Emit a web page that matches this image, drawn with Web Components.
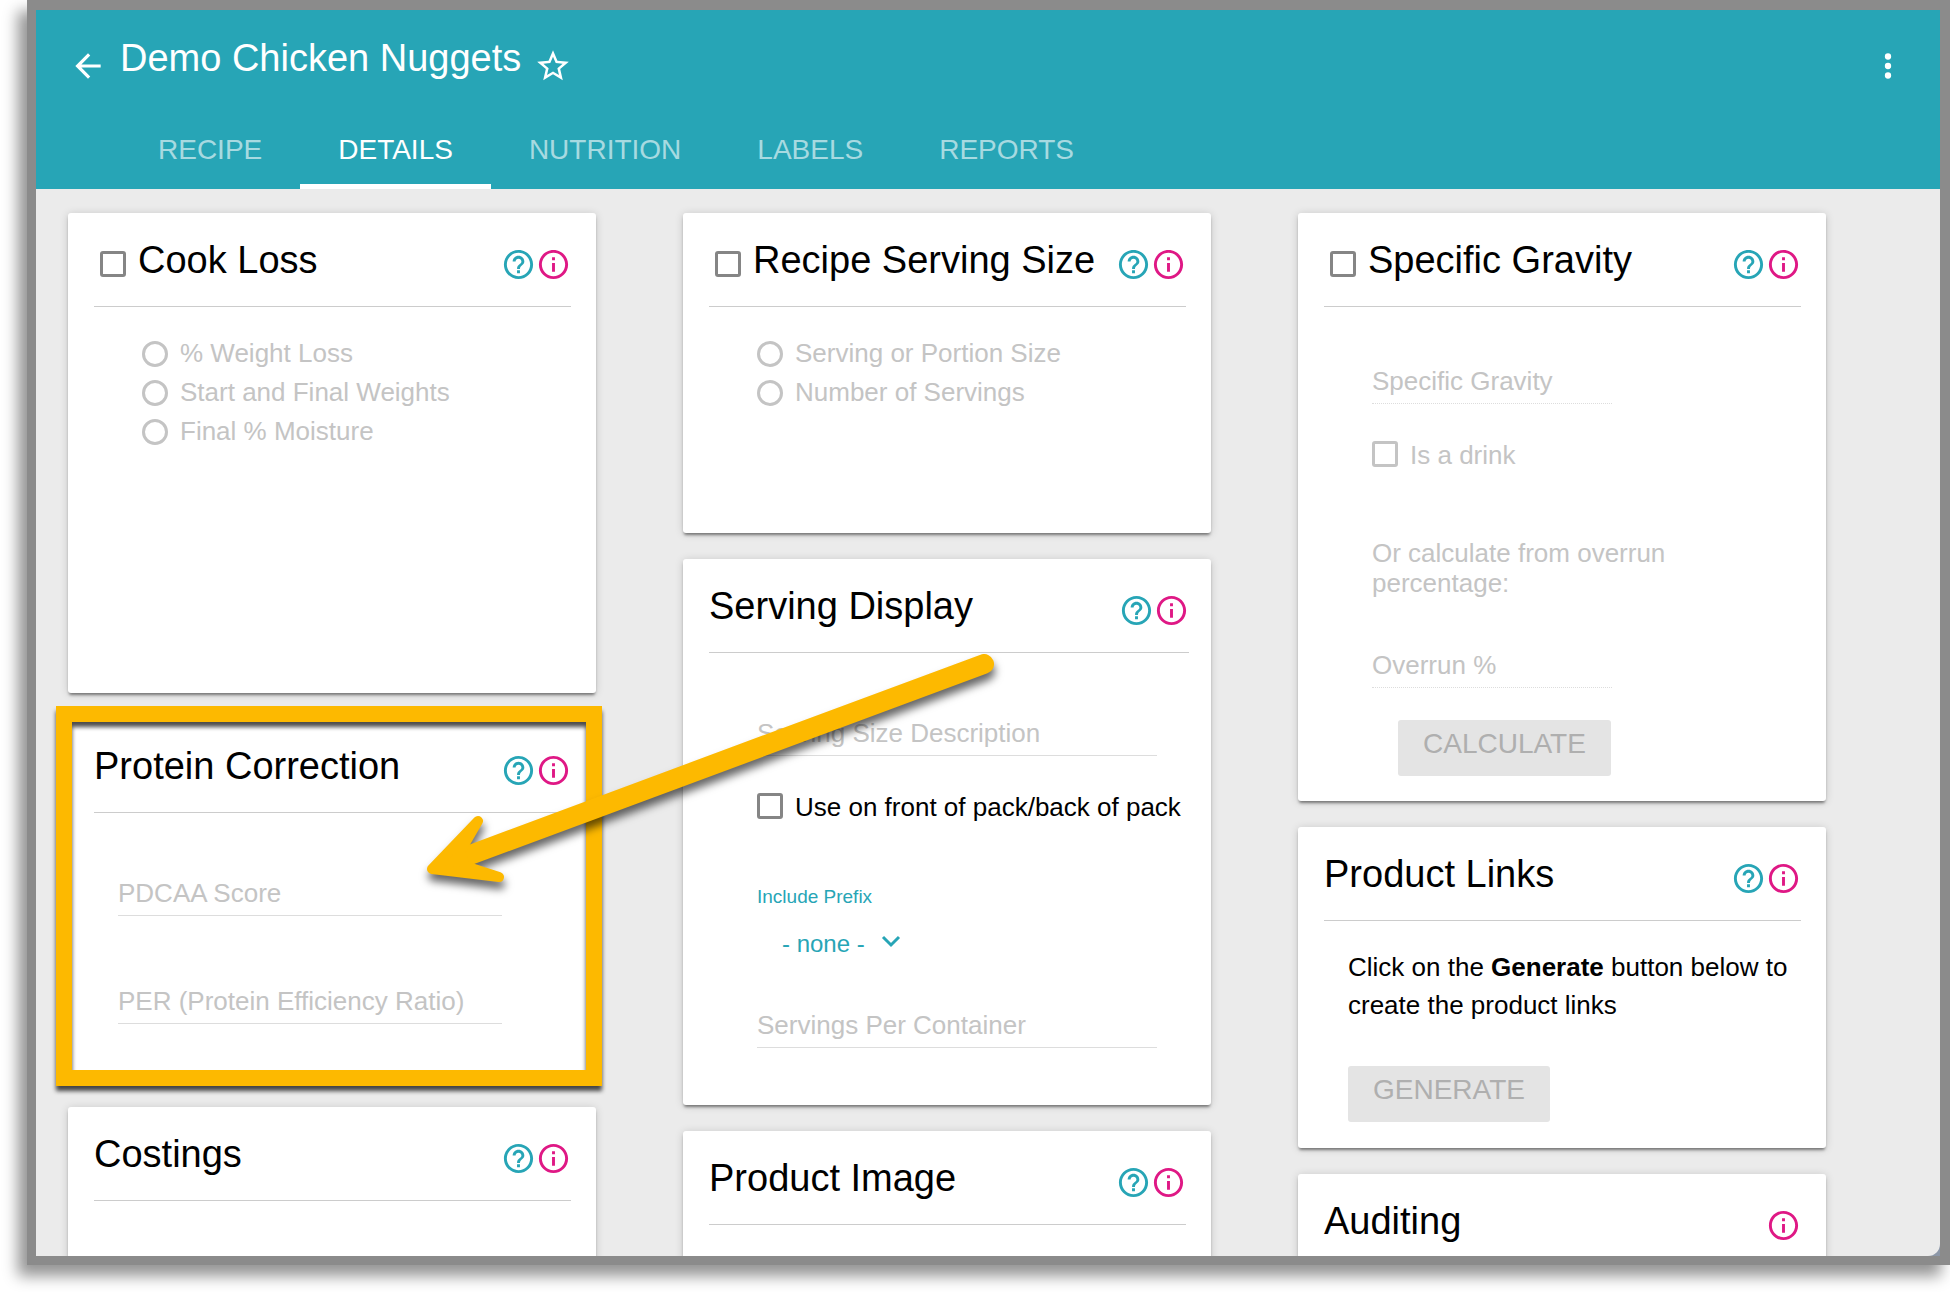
<!DOCTYPE html>
<html lang="en">
<head>
<meta charset="utf-8">
<title>Demo Chicken Nuggets</title>
<style>
  html, body { margin: 0; height: 100%; background: #fff; overflow: hidden; }
  body {
    --teal: #27a5b6; --pink: #df1885; --amber: #fdb900;
    --ink: #000; --muted: #c4c4c4; --box: #858585;
    font: 26px/38px "Liberation Sans", Arial, Helvetica, sans-serif;
    color: var(--ink);
  }
  .column { display: flex; flex-direction: column; gap: 26px; min-width: 0; }
  .tall { min-height: 480px; }
  .medium { min-height: 320px; }
  .wide { --head-end: 22px; }
  .deep { --body-top: 65px; --body-bottom: 57px; }
  .outer { --body-start: 50px; }
  .short { width: 240px; --line: dotted; }
  .note { margin: 0; line-height: 30px; color: var(--muted); }
  .copy { margin: 0; }
  .field-gap { margin-top: 70px; }
  .row-gap { margin-top: 32px; }
  .section-gap { margin-top: 63px; }
  .block-gap { margin-top: 52px; }
  .indent { margin-left: 26px; }
  .button-gap { margin-top: 42px; }
</style>
</head>
<body>
<recipe-window>
  <recipe-header slot="header" heading="Demo Chicken Nuggets">
    <recipe-tab>RECIPE</recipe-tab>
    <recipe-tab active>DETAILS</recipe-tab>
    <recipe-tab>NUTRITION</recipe-tab>
    <recipe-tab>LABELS</recipe-tab>
    <recipe-tab>REPORTS</recipe-tab>
  </recipe-header>

  <div class="column">
    <detail-card class="tall" heading="Cook Loss" toggle help>
      <choice-row type="radio" name="loss" label="% Weight Loss" disabled></choice-row>
      <choice-row type="radio" name="loss" label="Start and Final Weights" disabled></choice-row>
      <choice-row type="radio" name="loss" label="Final % Moisture" disabled></choice-row>
    </detail-card>
    <detail-card class="deep outer" style="--body-end:94px" heading="Protein Correction" help highlight>
      <text-field label="PDCAA Score"></text-field>
      <text-field class="field-gap" label="PER (Protein Efficiency Ratio)"></text-field>
      <pointer-arrow slot="over"></pointer-arrow>
    </detail-card>
    <detail-card class="medium" heading="Costings" help></detail-card>
  </div>

  <div class="column">
    <detail-card class="medium" heading="Recipe Serving Size" toggle help>
      <choice-row type="radio" name="size" label="Serving or Portion Size" disabled></choice-row>
      <choice-row type="radio" name="size" label="Number of Servings" disabled></choice-row>
    </detail-card>
    <detail-card class="deep wide" style="--body-end:54px" heading="Serving Display" help>
      <text-field label="Serving Size Description"></text-field>
      <choice-row class="row-gap" type="checkbox" label="Use on front of pack/back of pack"></choice-row>
      <prefix-select style="margin-top:59px" label="Include Prefix"></prefix-select>
      <text-field class="block-gap" label="Servings Per Container"></text-field>
    </detail-card>
    <detail-card class="medium" heading="Product Image" help></detail-card>
  </div>

  <div class="column">
    <detail-card style="--body-top:59px;--body-bottom:25px" heading="Specific Gravity" toggle help>
      <text-field class="short" label="Specific Gravity" disabled></text-field>
      <choice-row class="row-gap" type="checkbox" label="Is a drink" disabled></choice-row>
      <p class="note section-gap">Or calculate from overrun percentage:</p>
      <text-field class="short block-gap" label="Overrun %" disabled></text-field>
      <flat-button class="row-gap indent">CALCULATE</flat-button>
    </detail-card>
    <detail-card class="outer" style="--body-end:25px;--body-bottom:26px" heading="Product Links" help>
      <p class="copy">Click on the <b>Generate</b> button below to create the product links</p>
      <flat-button class="button-gap">GENERATE</flat-button>
    </detail-card>
    <detail-card class="medium" heading="Auditing"></detail-card>
  </div>
</recipe-window>

<script>
const base = `*,*::before,*::after{box-sizing:border-box}
  button,input,select{font:inherit;color:inherit;margin:0;padding:0;border:0;background:none;border-radius:0}
  svg{display:block}`;

class Piece extends HTMLElement {
  connectedCallback() {
    if (this.shadowRoot) return;
    this.attachShadow({ mode: 'open' }).innerHTML = `<style>${base}${this.css()}</style>${this.html()}`;
  }
  attr(n) { return this.getAttribute(n) || ''; }
  has(n) { return this.hasAttribute(n); }
}

customElements.define('recipe-window', class extends Piece {
  css() { return `
    :host{display:flex;flex-direction:column;height:calc(100vh - 27px);margin-left:27px;
      border:solid #8b8b8b;border-width:10px 10px 9px 9px;background:#8c97a8;
      box-shadow:-9px 11px 14px rgba(0,0,0,.42);box-sizing:border-box}
    main{flex:1;min-height:0;overflow:hidden;background:#ebebeb;border-bottom-right-radius:12px;
      display:grid;grid-template-columns:repeat(3,minmax(0,1fr));column-gap:87px;align-items:start;
      padding:24px 114px 0 32px}`; }
  html() { return `<slot name="header"></slot><main><slot></slot></main>`; }
});

customElements.define('recipe-header', class extends Piece {
  css() { return `
    :host{display:block;background:var(--teal);color:#fff;padding:26px 33px 0}
    .bar{display:flex;align-items:flex-end;gap:13px;height:49px}
    h1{margin:0;align-self:flex-start;font-size:38px;line-height:44px;font-weight:400;white-space:nowrap}
    .more{margin-left:auto}
    svg{width:38px;height:38px;fill:#fff}
    nav{display:flex;margin:28px 0 0 51px}`; }
  html() { return `
    <div class="bar">
      <button aria-label="Back"><svg viewBox="0 0 24 24"><path d="M20 11H7.83l5.59-5.59L12 4l-8 8 8 8 1.41-1.41L7.83 13H20v-2z"/></svg></button>
      <h1>${this.attr('heading')}</h1>
      <button aria-label="Favourite"><svg viewBox="0 0 24 24"><path d="M22 9.24l-7.19-.62L12 2 9.19 8.63 2 9.24l5.46 4.73L5.82 21 12 17.27 18.18 21l-1.63-7.03L22 9.24zM12 15.4l-3.76 2.27 1-4.28-3.32-2.88 4.38-.38L12 6.1l1.71 4.04 4.38.38-3.32 2.88 1 4.28L12 15.4z"/></svg></button>
      <button class="more" aria-label="More options"><svg viewBox="0 0 24 24"><path d="M12 8a2 2 0 1 0 0-4 2 2 0 0 0 0 4zm0 2a2 2 0 1 0 0 4 2 2 0 0 0 0-4zm0 6a2 2 0 1 0 0 4 2 2 0 0 0 0-4z"/></svg></button>
    </div>
    <nav><slot></slot></nav>`; }
});

customElements.define('recipe-tab', class extends Piece {
  css() { return `
    :host{display:block}
    a{display:block;padding:21px 38px 18px;border-bottom:5px solid transparent;
      font-size:28px;line-height:32px;color:rgba(255,255,255,.6);text-decoration:none}
    :host([active]) a{color:#fff;border-color:#fff}`; }
  html() { return `<a href="#"><slot></slot></a>`; }
});

customElements.define('detail-card', class extends Piece {
  css() { return `
    :host{display:block;position:relative;background:#fff;border-radius:3px;box-sizing:border-box;
      box-shadow:0 3px 3px -1px rgba(0,0,0,.45),0 1px 8px rgba(0,0,0,.16)}
    :host([highlight]){z-index:2}
    :host([highlight])::after{content:"";position:absolute;inset:-13px -6px -5px -12px;
      border:16px solid var(--amber);filter:drop-shadow(0 5px 2px rgba(0,0,0,.7))}
    header{display:flex;align-items:flex-end;margin:0 var(--head-end,25px) 0 26px;
      padding:25px 0 24px;border-bottom:1px solid #ccc}
    h2{flex:1;margin:0;font-size:38px;line-height:44px;font-weight:400;white-space:nowrap}
    input{appearance:none;width:26px;height:26px;margin:0 12px 5px 6px;border:3px solid var(--box);border-radius:3px}
    .info,.help{width:35px;height:35px}
    .help{color:var(--teal)} .info{color:var(--pink)}
    svg{width:35px;height:35px;fill:currentColor}
    .body{display:flex;flex-direction:column;align-items:stretch;
      padding:var(--body-top,27px) var(--body-end,74px) var(--body-bottom,27px) var(--body-start,74px)}
    ::slotted([slot=over]){position:absolute;z-index:3;left:352px;top:-75px}`; }
  html() {
    const h = this.attr('heading');
    return `<header>
      ${this.has('toggle') ? '<input id="on" type="checkbox">' : ''}
      <h2>${this.has('toggle') ? `<label for="on">${h}</label>` : h}</h2>
      ${this.has('help') ? `<button class="help" aria-label="Help"><svg viewBox="0 0 24 24"><path d="M11 18h2v-2h-2v2zm1-16C6.48 2 2 6.48 2 12s4.48 10 10 10 10-4.48 10-10S17.52 2 12 2zm0 18c-4.41 0-8-3.59-8-8s3.59-8 8-8 8 3.59 8 8-3.59 8-8 8zm0-14c-2.21 0-4 1.79-4 4h2c0-1.1.9-2 2-2s2 .9 2 2c0 2-3 1.75-3 5h2c0-2.25 3-2.5 3-5 0-2.21-1.79-4-4-4z"/></svg></button>` : ''}
      <button class="info" aria-label="Information"><svg viewBox="0 0 24 24"><path d="M11 17h2v-6h-2v6zm1-15C6.48 2 2 6.48 2 12s4.48 10 10 10 10-4.48 10-10S17.52 2 12 2zm0 18c-4.41 0-8-3.59-8-8s3.59-8 8-8 8 3.59 8 8-3.59 8-8 8zM11 9h2V7h-2v2z"/></svg></button>
    </header>
    <div class="body"><slot></slot></div>
    <slot name="over"></slot>`; }
});

customElements.define('choice-row', class extends Piece {
  css() { return `
    :host{display:flex;align-items:center;gap:12px;line-height:39px}
    :host([disabled]){color:var(--muted);--box:var(--muted)}
    input{appearance:none;flex:none;width:26px;height:26px;border:3px solid var(--box)}
    [type=radio]{border-radius:50%}
    [type=checkbox]{border-radius:3px;margin-bottom:3px}
    label{white-space:nowrap}`; }
  html() { return `<input id="c" type="${this.attr('type')}" name="${this.attr('name')}"${this.has('disabled') ? ' disabled' : ''}>
    <label for="c">${this.attr('label')}</label>`; }
});

customElements.define('text-field', class extends Piece {
  css() { return `
    :host{display:grid;height:38px;line-height:30px;border-bottom:1px var(--line,solid) #ddd;box-sizing:border-box}
    label,input{grid-area:1/1;height:30px;min-width:0}
    label{color:var(--muted);white-space:nowrap;pointer-events:none}
    input{width:100%;outline:0}`; }
  html() { return `<input id="t" type="text"${this.has('disabled') ? ' disabled' : ''}><label for="t">${this.attr('label')}</label>`; }
});

customElements.define('prefix-select', class extends Piece {
  css() { return `
    :host{display:grid;row-gap:22px;justify-items:start;color:var(--teal)}
    label{font-size:19px;line-height:22px}
    .pick{display:grid}
    select{appearance:none;grid-area:1/1;height:28px;padding:0 36px 0 25px;font-size:24px;line-height:28px}
    svg{grid-area:1/1;justify-self:end;width:20px;height:24px;fill:none;stroke:currentColor;stroke-width:3;pointer-events:none}`; }
  html() { return `<label for="s">${this.attr('label')}</label>
    <div class="pick"><select id="s"><option>- none -</option></select>
    <svg viewBox="0 0 20 24"><path d="M2 7l8 8 8-8"/></svg></div>`; }
});

customElements.define('flat-button', class extends Piece {
  css() { return `
    :host{display:block}
    button{display:block;height:56px;padding:0 25px 8px;border-radius:3px;background:#e4e4e4;color:#afafaf;font-size:28px;line-height:32px}`; }
  html() { return `<button disabled><slot></slot></button>`; }
});

customElements.define('pointer-arrow', class extends Piece {
  css() { return `
    :host{display:block;pointer-events:none}
    svg{width:590px;height:260px;overflow:visible;filter:drop-shadow(1px 7px 4px rgba(0,0,0,.6));
      stroke:var(--amber);fill:var(--amber);stroke-linecap:round;stroke-linejoin:round}`; }
  html() { return `<svg viewBox="420 644 590 260" aria-hidden="true">
    <path stroke-width="20" d="M470 855L984 664"/>
    <path stroke-width="10" d="M432 869L478 821 460 852 465 866 499 877Z"/></svg>`; }
});
</script>
</body>
</html>
